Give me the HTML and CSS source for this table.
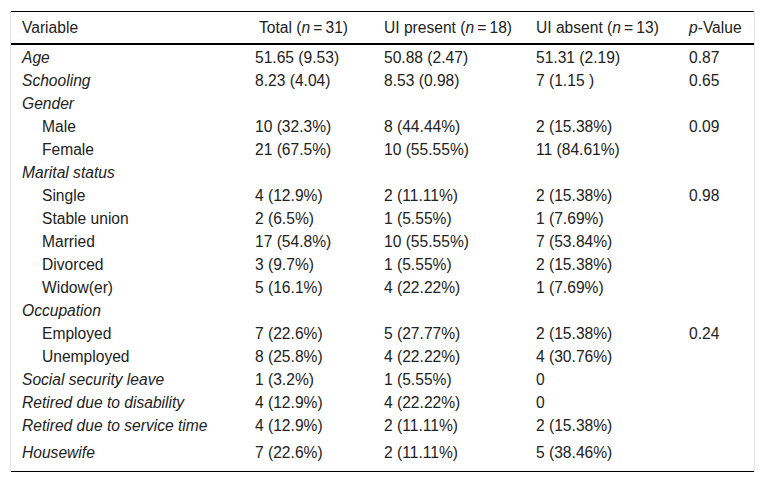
FILE: index.html
```html
<!DOCTYPE html>
<html>
<head>
<meta charset="utf-8">
<link rel="stylesheet" href="styles.css">
</head>
<body>
<div class="wrap">
<table class="tbl">
<colgroup>
<col class="c1"><col class="c2"><col class="c3"><col class="c4"><col class="c5">
</colgroup>
<thead>
<tr>
<th>Variable</th>
<th class="th-total">Total (<i>n</i>&thinsp;=&thinsp;31)</th>
<th>UI present (<i>n</i>&thinsp;=&thinsp;18)</th>
<th>UI absent (<i>n</i>&thinsp;=&thinsp;13)</th>
<th><i>p</i>-Value</th>
</tr>
</thead>
<tbody>
<tr class="first"><td class="cat">Age</td><td>51.65 (9.53)</td><td>50.88 (2.47)</td><td>51.31 (2.19)</td><td>0.87</td></tr>
<tr><td class="cat">Schooling</td><td>8.23 (4.04)</td><td>8.53 (0.98)</td><td>7 (1.15 )</td><td>0.65</td></tr>
<tr><td class="cat">Gender</td><td></td><td></td><td></td><td></td></tr>
<tr><td class="sub">Male</td><td>10 (32.3%)</td><td>8 (44.44%)</td><td>2 (15.38%)</td><td>0.09</td></tr>
<tr><td class="sub">Female</td><td>21 (67.5%)</td><td>10 (55.55%)</td><td>11 (84.61%)</td><td></td></tr>
<tr><td class="cat">Marital status</td><td></td><td></td><td></td><td></td></tr>
<tr><td class="sub">Single</td><td>4 (12.9%)</td><td>2 (11.11%)</td><td>2 (15.38%)</td><td>0.98</td></tr>
<tr><td class="sub">Stable union</td><td>2 (6.5%)</td><td>1 (5.55%)</td><td>1 (7.69%)</td><td></td></tr>
<tr><td class="sub">Married</td><td>17 (54.8%)</td><td>10 (55.55%)</td><td>7 (53.84%)</td><td></td></tr>
<tr><td class="sub">Divorced</td><td>3 (9.7%)</td><td>1 (5.55%)</td><td>2 (15.38%)</td><td></td></tr>
<tr><td class="sub">Widow(er)</td><td>5 (16.1%)</td><td>4 (22.22%)</td><td>1 (7.69%)</td><td></td></tr>
<tr><td class="cat">Occupation</td><td></td><td></td><td></td><td></td></tr>
<tr><td class="sub">Employed</td><td>7 (22.6%)</td><td>5 (27.77%)</td><td>2 (15.38%)</td><td>0.24</td></tr>
<tr><td class="sub">Unemployed</td><td>8 (25.8%)</td><td>4 (22.22%)</td><td>4 (30.76%)</td><td></td></tr>
<tr><td class="cat">Social security leave</td><td>1 (3.2%)</td><td>1 (5.55%)</td><td>0</td><td></td></tr>
<tr><td class="cat">Retired due to disability</td><td>4 (12.9%)</td><td>4 (22.22%)</td><td>0</td><td></td></tr>
<tr><td class="cat">Retired due to service time</td><td>4 (12.9%)</td><td>2 (11.11%)</td><td>2 (15.38%)</td><td></td></tr>
<tr class="last"><td class="cat">Housewife</td><td>7 (22.6%)</td><td>2 (11.11%)</td><td>5 (38.46%)</td><td></td></tr>
</tbody>
</table>
</div>
</body>
</html>
```

FILE: styles.css
```css
html, body {
  margin: 0;
  padding: 0;
  background: #fff;
}
body {
  font-family: "Liberation Sans", Arial, sans-serif;
  font-size: 15.6px;
  color: #222;
}
.wrap {
  margin: 11px 0 0 10px;
  width: 743px;
  border-left: 1px solid #e6e6e6;
  border-right: 1px solid #e6e6e6;
}
.tbl {
  width: 743px;
  border-collapse: collapse;
  table-layout: fixed;
  border-top: 1px solid #000;
  border-bottom: 1px solid #000;
}
.c1 { width: 233px; }
.c2 { width: 129px; }
.c3 { width: 152px; }
.c4 { width: 153px; }
.c5 { width: 76px; }
.tbl th {
  font-weight: normal;
  text-align: left;
  height: 31px;
  line-height: 31px;
  padding: 0 0 0 11px;
  border-bottom: 2px solid #000;
  vertical-align: middle;
  white-space: nowrap;
}
.tbl th.th-total {
  padding-left: 15px;
}
.tbl td {
  height: 23px;
  line-height: 23px;
  padding: 0 0 0 11px;
  vertical-align: top;
  white-space: nowrap;
}
.tbl tr.first td {
  padding-top: 1px;
}
.tbl td.cat {
  font-style: italic;
}
.tbl td.sub {
  padding-left: 31px;
}
.tbl tr.last td {
  padding-top: 4px;
  padding-bottom: 7px;
}
```
